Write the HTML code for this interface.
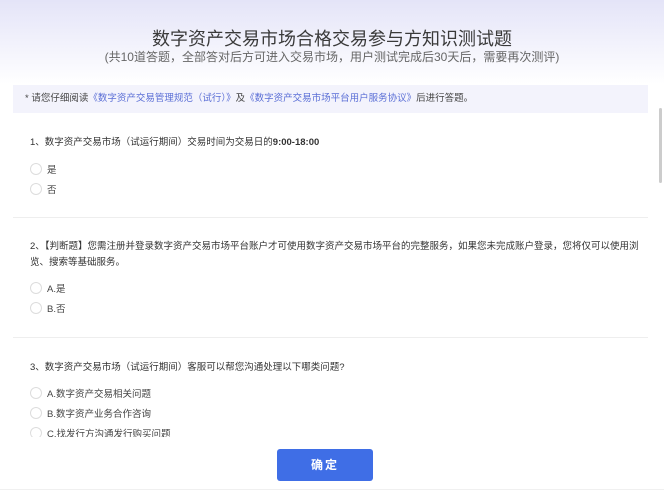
<!DOCTYPE html>
<html><head><meta charset="utf-8"><style>
*{margin:0;padding:0;box-sizing:border-box}
body{width:664px;height:492px;overflow:hidden;background:#fff;font-family:"Liberation Sans","Noto Sans CJK SC",sans-serif;color:#333;position:relative}
.hdr{position:absolute;left:0;top:0;width:664px;height:84px;background:linear-gradient(#e4e4f8,#fff)}
.t{position:absolute;top:25px;width:664px;text-align:center;font-size:18px;color:#3a3a3a}
.s{position:absolute;top:48px;width:664px;text-align:center;font-size:12px;color:#666}
.note{position:absolute;left:13px;top:85px;width:635px;height:28px;background:#f3f3fc;font-size:9.5px;line-height:28px;padding-left:12px;color:#444}
.note a{color:#5b6fd6;text-decoration:none}
.clip{position:absolute;left:0;top:114px;width:664px;height:323px;overflow:hidden}
.q{position:absolute;left:30px;font-size:9.5px;color:#333;line-height:16px;width:610px}
.o{position:absolute;left:30px;font-size:9.5px;color:#444;line-height:12px}
.o:before{content:"";display:inline-block;width:10px;height:10px;border:1px solid #ddd;border-radius:50%;vertical-align:-2px;margin-right:5px}
.hr{position:absolute;left:13px;width:635px;height:1px;background:#eee}
.btn{position:absolute;left:277px;top:449px;width:96px;height:32px;background:#3f6ee6;border-radius:3px;color:#fff;font-size:12px;font-weight:bold;text-align:center;line-height:32px;letter-spacing:2px}
.sb{position:absolute;left:659px;top:108px;width:3px;height:75px;background:#ccc;border-radius:2px}
.bl{position:absolute;left:0;top:489px;width:664px;height:1px;background:#f0f0f0}
</style></head><body>
<div class="hdr"></div>
<div class="t">数字资产交易市场合格交易参与方知识测试题</div>
<div class="s">(共10道答题，全部答对后方可进入交易市场，用户测试完成后30天后，需要再次测评)</div>
<div class="note">* 请您仔细阅读<a>《数字资产交易管理规范（试行）》</a>及<a>《数字资产交易市场平台用户服务协议》</a>后进行答题。</div>
<div class="clip">
<div class="q" style="top:21px">1、数字资产交易市场（试运行期间）交易时间为交易日的<b>9:00-18:00</b></div>
<div class="o" style="top:49px">是</div>
<div class="o" style="top:69px">否</div>
<div class="hr" style="top:103px"></div>
<div class="q" style="top:125px">2、【判断题】您需注册并登录数字资产交易市场平台账户才可使用数字资产交易市场平台的完整服务，如果您未完成账户登录，您将仅可以使用浏览、搜索等基础服务。</div>
<div class="o" style="top:168px">A.是</div>
<div class="o" style="top:188px">B.否</div>
<div class="hr" style="top:223px"></div>
<div class="q" style="top:246px">3、数字资产交易市场（试运行期间）客服可以帮您沟通处理以下哪类问题?</div>
<div class="o" style="top:273px">A.数字资产交易相关问题</div>
<div class="o" style="top:293px">B.数字资产业务合作咨询</div>
<div class="o" style="top:313px">C.找发行方沟通发行购买问题</div>
</div>
<div class="btn">确定</div>
<div class="sb"></div>
<div class="bl"></div>
</body></html>
